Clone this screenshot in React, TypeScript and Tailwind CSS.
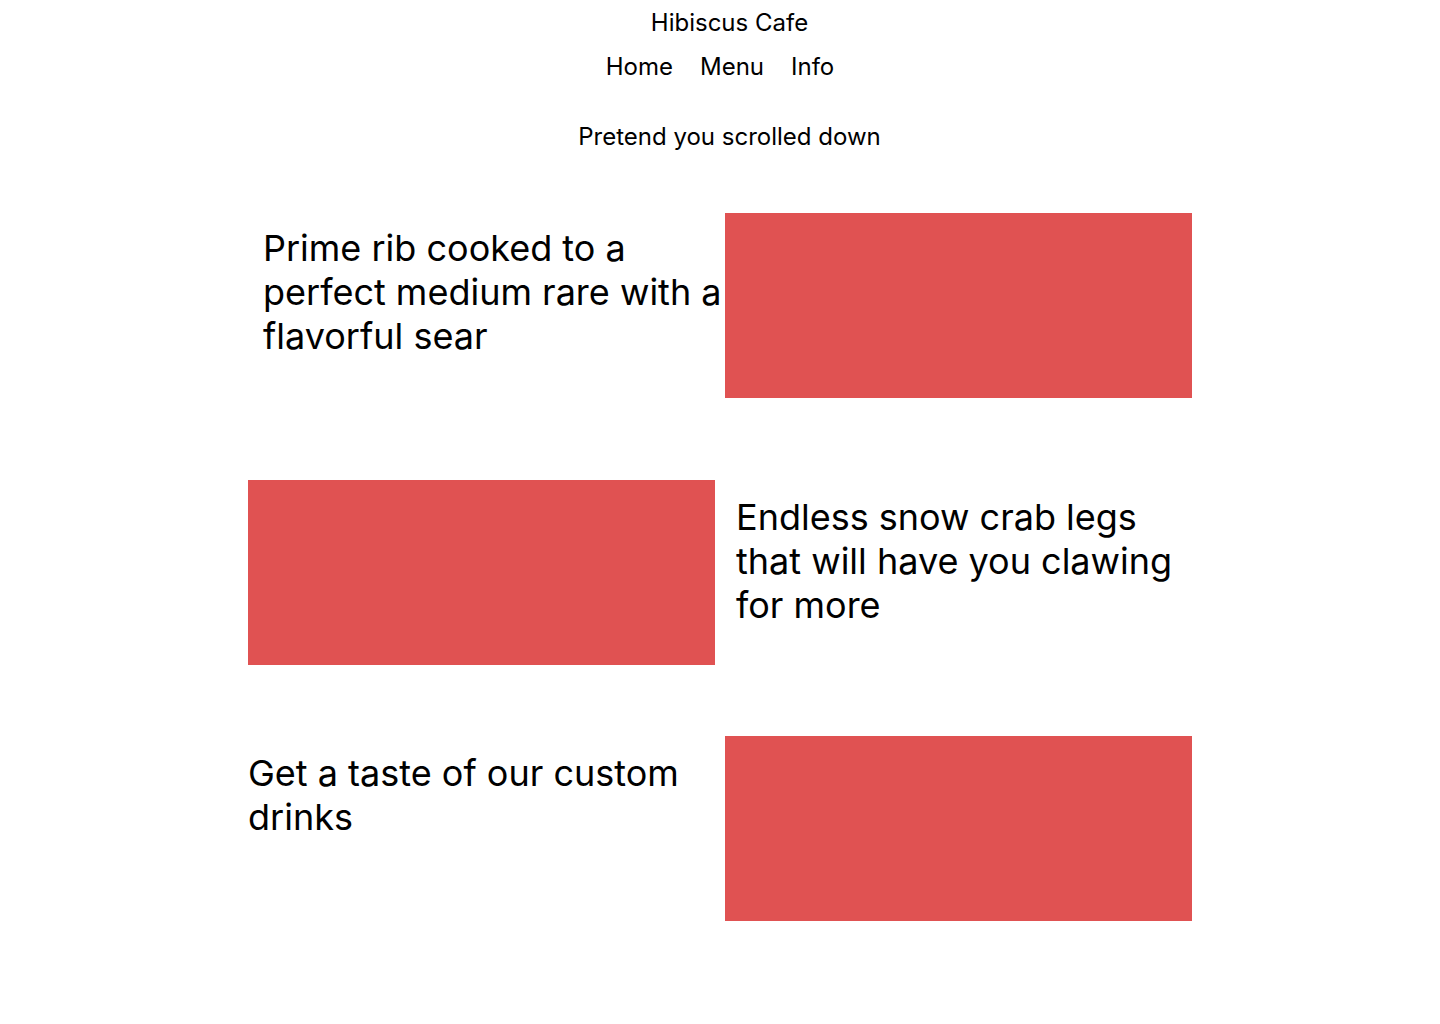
const rows = [
  { text: "Prime rib cooked to a perfect medium rare with a flavorful sear" },
  { text: "Endless snow crab legs that will have you clawing for more" },
  { text: "Get a taste of our custom drinks" },
]

export default function App() {
  return (
    <main className="min-h-screen bg-white text-black font-['Inter',sans-serif]">
      <header className="flex flex-col items-center">
        <h1 className="mt-[9px] pl-[19px] text-[24px] leading-[28px]">Hibiscus Cafe</h1>
        <nav className="mt-[16px] flex gap-[27px] text-[24px] leading-[28px]">
          <a href="#">Home</a>
          <a href="#">Menu</a>
          <a href="#">Info</a>
        </nav>
      </header>

      <p className="mt-[42px] pl-[19px] text-center text-[24px] leading-[28px]">Pretend you scrolled down</p>

      <section className="mx-auto mt-[62px] w-[944px]">
        <div className="flex justify-between">
          <p className="w-[477px] pl-[15px] pt-[13px] text-[36px] leading-[44px]">{rows[0].text}</p>
          <div className="h-[185px] w-[467px] shrink-0 bg-[#e05252]" />
        </div>
        <div className="mt-[82px] flex gap-[21px]">
          <div className="h-[185px] w-[467px] shrink-0 bg-[#e05252]" />
          <p className="w-[456px] pt-[15px] text-[36px] leading-[44px]">{rows[1].text}</p>
        </div>
        <div className="mt-[71px] flex justify-between">
          <p className="w-[460px] pt-[15px] text-[36px] leading-[44px]">{rows[2].text}</p>
          <div className="h-[185px] w-[467px] shrink-0 bg-[#e05252]" />
        </div>
      </section>
    </main>
  )
}
